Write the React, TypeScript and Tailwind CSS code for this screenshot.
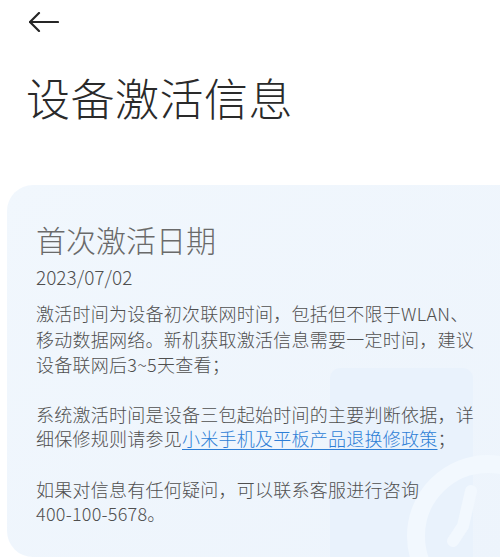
import { ReactNode } from "react";

function Line({ children }: { children: ReactNode }) {
  return <span className="block whitespace-nowrap">{children}</span>;
}

export default function App() {
  return (
    <div className="relative w-[500px] h-[560px] overflow-hidden bg-white font-['Noto_Sans_CJK_SC',sans-serif]">
      {/* back arrow */}
      <div className="pt-[12px] pl-[29px]">
        <svg width="30" height="20" viewBox="0 0 30 20" fill="none" stroke="#262626" strokeWidth="2.2" strokeLinecap="round" strokeLinejoin="round">
          <path d="M10 1 L1 10 L10 19" />
          <path d="M1 10 H29" />
        </svg>
      </div>

      <h1 className="mt-[37px] ml-[26px] text-[44px] leading-[56px] font-extralight text-[#2a2a2a] tracking-[0.5px]">
        设备激活信息
      </h1>

      <div className="relative mt-[60px] ml-[7px] w-[520px] h-[372px] rounded-[26px] bg-gradient-to-br from-[#f1f7fd] to-[#edf4fc] overflow-hidden">
        {/* background decoration */}
        <div className="absolute left-[323px] top-[183px] w-[143px] h-[220px] rounded-[10px] bg-[#e9f2fc]" />
        <svg className="absolute left-[396px] top-[266px]" width="170" height="170" viewBox="0 0 170 170" fill="none">
          <circle cx="85" cy="85" r="72" stroke="#f2f8fe" strokeWidth="18" />
          <path d="M68 40 L60 75 L50 90" stroke="#f2f8fe" strokeWidth="12" strokeLinecap="round" strokeLinejoin="round" />
        </svg>

        <div className="relative pt-[34px] pl-[29px] font-light text-[#4f4f4f]">
          <div className="text-[30px] leading-[40px] text-[#6a6a6a]">首次激活日期</div>
          <div className="mt-[5px] text-[19px] leading-[26px] text-[#4f4f4f]">2023/07/02</div>

          <div className="mt-[11px] text-[18px] leading-[25.5px] tracking-[0.25px]">
            <Line>激活时间为设备初次联网时间，包括但不限于WLAN、</Line>
            <Line>移动数据网络。新机获取激活信息需要一定时间，建议</Line>
            <Line>设备联网后3~5天查看；</Line>
          </div>

          <div className="mt-[24px] text-[18px] leading-[24px] tracking-[0.25px]">
            <Line>系统激活时间是设备三包起始时间的主要判断依据，详</Line>
            <Line>
              细保修规则请参见
              <span className="text-[#2d7ed6] underline underline-offset-[3px] decoration-1">小米手机及平板产品退换修政策</span>
              ；
            </Line>
          </div>

          <div className="mt-[27px] text-[18px] leading-[24px] tracking-[0.25px]">
            <Line>如果对信息有任何疑问，可以联系客服进行咨询</Line>
            <Line>400-100-5678。</Line>
          </div>
        </div>
      </div>
    </div>
  );
}
